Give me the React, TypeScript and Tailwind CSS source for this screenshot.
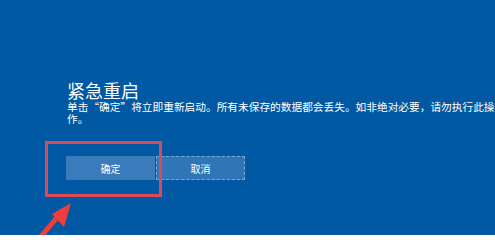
export default function App() {
  return (
    <div
      className="relative w-[495px] h-[235px] overflow-hidden bg-[#0059a2] text-white"
      style={{ fontFamily: '"Noto Sans CJK SC", "Noto Sans", sans-serif' }}
    >
      <div className="pl-[67px] pt-[80px]">
        <h1 className="text-[18px] leading-[21px] font-normal">紧急重启</h1>
        <p className="text-[10.7px] leading-[12px] whitespace-nowrap">
          单击“确定”将立即重新启动。所有未保存的数据都会丢失。如非绝对必要，请勿执行此操
          <br />
          作。
        </p>
        <div className="mt-[31px] -ml-[1px] flex gap-[1px]">
          <button className="w-[89px] h-[24px] bg-[#3a7bbb] text-[10px] text-white">确定</button>
          <button className="w-[89px] h-[24px] bg-[#3076b7] border border-dashed border-[#7fa9d4] text-[10px] text-white">
            取消
          </button>
        </div>
      </div>

      {/* highlight box */}
      <div className="absolute left-[45px] top-[141px] w-[117px] h-[56px] border-[3px] border-[#df4856]" />

      {/* arrow */}
      <svg className="absolute left-0 top-0" width="495" height="235" viewBox="0 0 495 235">
        <line x1="38" y1="240" x2="60" y2="214" stroke="#f23c3c" strokeWidth="5" />
        <polygon points="71,203 52,214 64,227" fill="#f23c3c" />
      </svg>
    </div>
  );
}
